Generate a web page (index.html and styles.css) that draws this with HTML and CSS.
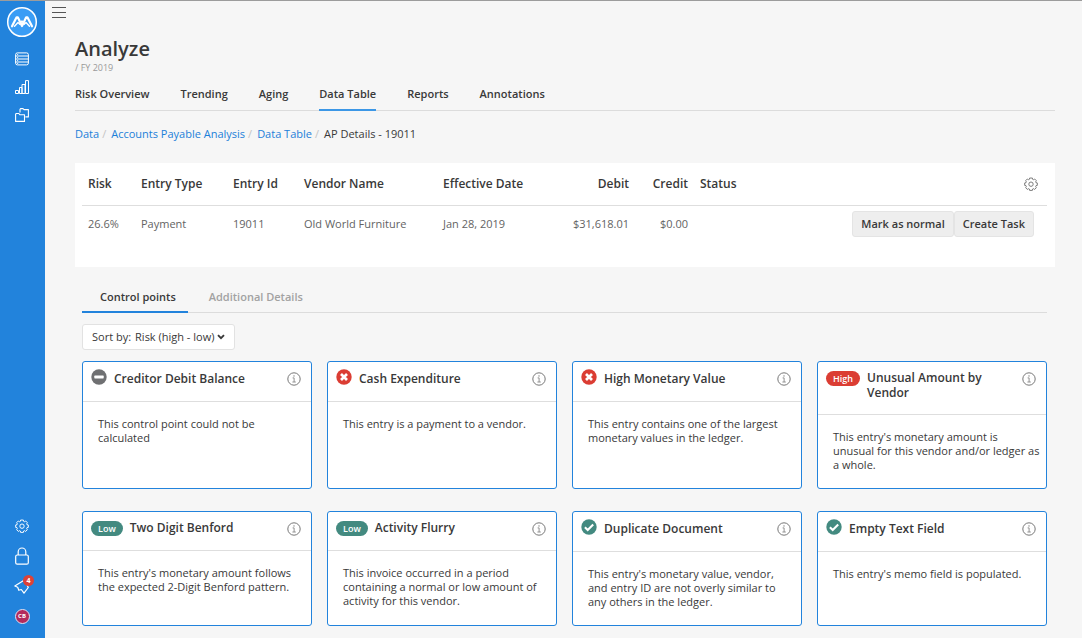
FILE: index.html
```html
<!DOCTYPE html>
<html lang="en">
<head>
<meta charset="utf-8">
<meta name="viewport" content="width=device-width, initial-scale=1">
<title>Analyze</title>
<link rel="stylesheet" href="styles.css">
</head>
<body>
<svg class="sprite" aria-hidden="true">
  <symbol id="gear" viewBox="0 0 16 16">
    <path fill="none" stroke="currentColor" stroke-width="1.100" stroke-linejoin="round" d="M6.400 1.200h3.200l.3 1.500.9.400 1.400-.8 1.900 1.900-.8 1.400.4.900 1.500.3v2.800l-1.500.3-.4 1 .8 1.300-1.900 2-1.400-.9-.9.400-.3 1.600H6.400l-.3-1.600-.9-.4-1.400.9-1.900-2 .8-1.300-.4-1-1.500-.3V6.800l1.500-.3.400-.9-.8-1.400 1.900-1.900 1.400.8.900-.4z"/>
    <circle cx="8" cy="8.200" r="2.500" fill="none" stroke="currentColor" stroke-width="1.100"/>
  </symbol>
  <symbol id="info" viewBox="0 0 14 14">
    <circle cx="7" cy="7" r="6.200" fill="none" stroke="currentColor"/>
    <path fill="none" stroke="currentColor" stroke-width=".8" d="M5.600 5.900h1.500v4M5.400 10h3.400"/>
    <circle cx="7" cy="3.900" r=".7" fill="currentColor"/>
  </symbol>
  <symbol id="minus" viewBox="0 0 16 16">
    <circle cx="8" cy="8" r="7.700" fill="#6f7072"/>
    <rect x="3.300" y="6.600" width="9.400" height="2.800" rx=".6" fill="#fff"/>
  </symbol>
  <symbol id="cross" viewBox="0 0 16 16">
    <circle cx="8" cy="8" r="7.700" fill="#db3d33"/>
    <path d="M5 5l6 6M11 5l-6 6" stroke="#fff" stroke-width="2.700"/>
  </symbol>
  <symbol id="check" viewBox="0 0 16 16">
    <circle cx="8" cy="8" r="7.700" fill="#438a80"/>
    <path d="M3.900 8.300l2.800 2.700 5.500-5.600" fill="none" stroke="#fff" stroke-width="2.100"/>
  </symbol>
</svg>

<div class="app">
  <nav class="sidebar" aria-label="Main">
    <a class="logo" href="#" aria-label="Home">
      <svg viewBox="0 0 32 32" width="32" height="32">
        <circle cx="16" cy="16" r="14.300" fill="#3a9df5" stroke="#fff" stroke-width="1.500"/>
        <g fill="none" stroke="#fff" stroke-linecap="round" stroke-linejoin="round">
          <path d="M6 20.300L10.600 11.300h1.200L16 20l4.200-8.700h1.200L26 20.300" stroke-width="2.200"/>
          <path d="M8.500 20.300l3.500-3.800 1.800 1.800L16 15l2.200 3.300 1.800-1.800 3.500 3.800" stroke-width="1.400"/>
        </g>
      </svg>
    </a>
    <a class="nav-link" href="#" aria-label="Data">
      <svg viewBox="0 0 14 14" width="14" height="14" fill="none" stroke="currentColor">
        <rect x=".6" y=".9" width="12.800" height="12" rx="1.800"/>
        <path d="M.6 4h12.800M.6 7h12.800M.6 10h12.800"/>
        <path stroke-width=".8" d="M2 2.500h1.200M2 5.500h1.200M2 8.500h1.200M2 11.500h1.200"/>
      </svg>
    </a>
    <a class="nav-link" href="#" aria-label="Analytics">
      <svg viewBox="0 0 14 14" width="14" height="14" fill="none" stroke="currentColor">
        <path d="M.5 10.500h3v3h-3zM4.500 7.500h2.500v6H4.500zM7 4.500h3v9H7zM10.500 .6h3v12.900h-3z"/>
      </svg>
    </a>
    <a class="nav-link" href="#" aria-label="Files">
      <svg viewBox="0 0 14 14" width="14" height="14" fill="none" stroke="currentColor" stroke-width="1.100" stroke-linejoin="round">
        <path d="M1.300 5.500h2.500l1 1.200h4.700v6.700H.6V6.200z"/>
        <path d="M5 4.500V1.300L5.600.6H8l1 1h4.400v7.300h-3"/>
      </svg>
    </a>
    <div class="sidebar-foot">
      <a class="foot-link" href="#" aria-label="Settings"><svg width="14" height="14"><use href="#gear"/></svg></a>
      <a class="foot-link" href="#" aria-label="Security">
        <svg viewBox="0 0 14 18" width="14" height="18" fill="none" stroke="currentColor" stroke-width="1.200">
          <rect x=".7" y="8" width="12.600" height="9.200" rx="1.500"/>
          <path d="M3.200 8V4.800a3.800 3.800 0 0 1 7.600 0V8"/>
        </svg>
      </a>
      <a class="foot-link" href="#" aria-label="Announcements, 4 new">
        <svg viewBox="0 0 16 16" width="16" height="16" fill="none" stroke="currentColor" stroke-width="1.200" stroke-linejoin="round">
          <path d="M.8 8L10.500 2l3.800 7.500L10 15.200 7.300 11.500l-2.500.8L3.700 9.300z"/>
        </svg>
        <span class="badge">4</span>
      </a>
      <a class="foot-link" href="#" aria-label="Account"><span class="avatar">CB</span></a>
    </div>
  </nav>

  <main class="main">
    <button class="menu" type="button" aria-label="Toggle menu">
      <svg viewBox="0 0 14 12" width="14" height="12" stroke="currentColor"><path d="M0 .5h14M0 5.500h14M0 10.500h14"/></svg>
    </button>
    <header class="heading">
      <h1>Analyze</h1>
      <p class="period">/ FY 2019</p>
    </header>
    <nav class="tabs" aria-label="Sections">
      <a class="tab" href="#">Risk Overview</a>
      <a class="tab" href="#">Trending</a>
      <a class="tab" href="#">Aging</a>
      <a class="tab tab-active" href="#">Data Table</a>
      <a class="tab" href="#">Reports</a>
      <a class="tab" href="#">Annotations</a>
    </nav>
    <nav class="crumbs" aria-label="Breadcrumb">
      <a href="#">Data</a><span class="slash">/</span><a href="#">Accounts Payable Analysis</a><span class="slash">/</span><a href="#">Data Table</a><span class="slash">/</span><span>AP Details - 19011</span>
    </nav>

    <section class="panel">
      <table class="entries">
        <colgroup><col class="c-risk"><col class="c-type"><col class="c-id"><col class="c-vendor"><col class="c-date"><col class="c-debit"><col class="c-credit"><col><col class="c-actions"></colgroup>
        <thead>
          <tr><th>Risk</th><th>Entry Type</th><th>Entry Id</th><th>Vendor Name</th><th>Effective Date</th><th class="num">Debit</th><th class="num">Credit</th><th>Status</th>
          <th class="tools"><button class="icon-btn" type="button" aria-label="Table settings"><svg width="14" height="14"><use href="#gear"/></svg></button></th></tr>
        </thead>
        <tbody>
          <tr><td>26.6%</td><td>Payment</td><td>19011</td><td>Old World Furniture</td><td>Jan 28, 2019</td><td class="num">$31,618.01</td><td class="num">$0.00</td><td></td>
          <td><div class="actions"><button class="btn" type="button">Mark as normal</button><button class="btn" type="button">Create Task</button></div></td></tr>
        </tbody>
      </table>
    </section>

    <section class="details">
      <div class="subtabs" role="tablist">
        <button class="subtab subtab-active" type="button" role="tab" aria-selected="true">Control points</button>
        <button class="subtab" type="button" role="tab" aria-selected="false">Additional Details</button>
      </div>
      <div class="sort">
        <label for="sort">Sort by:</label>
        <select id="sort"><option>Risk (high - low)</option><option>Risk (low - high)</option></select>
        <svg viewBox="0 0 8 6" width="8" height="6" aria-hidden="true"><path d="M1 1.200l3 3 3-3" fill="none" stroke="currentColor" stroke-width="1.900"/></svg>
      </div>

      <div class="cards">
        <article class="card">
          <header><svg class="mark" width="16" height="16"><use href="#minus"/></svg><h2>Creditor Debit Balance</h2><button class="icon-btn" type="button" aria-label="Info"><svg width="14" height="14"><use href="#info"/></svg></button></header>
          <p>This control point could not be calculated</p>
        </article>
        <article class="card">
          <header><svg class="mark" width="16" height="16"><use href="#cross"/></svg><h2>Cash Expenditure</h2><button class="icon-btn" type="button" aria-label="Info"><svg width="14" height="14"><use href="#info"/></svg></button></header>
          <p>This entry is a payment to a vendor.</p>
        </article>
        <article class="card">
          <header><svg class="mark" width="16" height="16"><use href="#cross"/></svg><h2>High Monetary Value</h2><button class="icon-btn" type="button" aria-label="Info"><svg width="14" height="14"><use href="#info"/></svg></button></header>
          <p>This entry contains one of the largest monetary values in the ledger.</p>
        </article>
        <article class="card card-rated">
          <header><span class="pill pill-high">High</span><h2>Unusual Amount by Vendor</h2><button class="icon-btn" type="button" aria-label="Info"><svg width="14" height="14"><use href="#info"/></svg></button></header>
          <p>This entry's monetary amount is unusual for this vendor and/or ledger as a whole.</p>
        </article>
        <article class="card card-rated">
          <header><span class="pill">Low</span><h2>Two Digit Benford</h2><button class="icon-btn" type="button" aria-label="Info"><svg width="14" height="14"><use href="#info"/></svg></button></header>
          <p>This entry's monetary amount follows the expected 2-Digit Benford pattern.</p>
        </article>
        <article class="card card-rated">
          <header><span class="pill">Low</span><h2>Activity Flurry</h2><button class="icon-btn" type="button" aria-label="Info"><svg width="14" height="14"><use href="#info"/></svg></button></header>
          <p>This invoice occurred in a period containing a normal or low amount of activity for this vendor.</p>
        </article>
        <article class="card">
          <header><svg class="mark" width="16" height="16"><use href="#check"/></svg><h2>Duplicate Document</h2><button class="icon-btn" type="button" aria-label="Info"><svg width="14" height="14"><use href="#info"/></svg></button></header>
          <p>This entry's monetary value, vendor, and entry ID are not overly similar to any others in the ledger.</p>
        </article>
        <article class="card">
          <header><svg class="mark" width="16" height="16"><use href="#check"/></svg><h2>Empty Text Field</h2><button class="icon-btn" type="button" aria-label="Info"><svg width="14" height="14"><use href="#info"/></svg></button></header>
          <p>This entry's memo field is populated.</p>
        </article>
      </div>
    </section>
  </main>
</div>
</body>
</html>
```
FILE: styles.css
```css
* { box-sizing: border-box; }
body {
  margin: 0;
  background: #f6f6f6;
  color: #393939;
  font-family: "Open Sans", "Noto Sans", sans-serif;
  font-size: 11px;
  line-height: 14px;
}
h1, h2, p { margin: 0; }
a { color: #1c80d9; text-decoration: none; }
button, select { font: inherit; color: inherit; border: 0; background: none; padding: 0; margin: 0; }
svg { display: block; }
.sprite { position: absolute; width: 0; height: 0; }

.app { display: flex; min-height: 100vh; border-top: 1px solid #9c9c9c; }

.sidebar {
  width: 45px;
  flex: none;
  background: #2283dc;
  display: flex;
  flex-direction: column;
  align-items: center;
  gap: 14px;
  padding: 5px 1px 12px 0;
}
.sidebar a { color: #fff; }
.nav-link { height: 14px; }
.sidebar-foot { margin-top: auto; display: flex; flex-direction: column; align-items: center; gap: 10px; }
.foot-link { position: relative; display: grid; place-items: center; width: 20px; height: 20px; }
.badge {
  position: absolute;
  top: -1px;
  right: -2px;
  width: 11px;
  height: 11px;
  border-radius: 50%;
  background: #dd4237;
  font-size: 7px;
  line-height: 11px;
  font-weight: 700;
  text-align: center;
}
.avatar {
  width: 15px;
  height: 15px;
  border: 1px solid #dfe4f4;
  border-radius: 50%;
  background: #b32a5c;
  font-size: 6px;
  line-height: 13px;
  font-weight: 700;
  text-align: center;
}

.main { flex: 1; min-width: 0; padding: 6px 27px 12px 30px; }
.menu { display: block; margin-left: -23px; color: #555; }
.heading { padding-top: 16px; }
h1 { font-size: 20px; line-height: 28px; font-weight: 600; }
.period { font-size: 9px; line-height: 10px; color: #9a9a9a; }

.tabs { display: flex; gap: 31px; margin-top: 14px; border-bottom: 1px solid #dcdcdc; }
.tab { color: #393939; font-weight: 600; padding-bottom: 8px; margin-bottom: -1px; border-bottom: 2px solid transparent; }
.tab-active { border-color: #3c97e6; }

.crumbs { margin-top: 16px; }
.slash { color: #c4c4c4; padding: 0 5px 0 3px; }

.panel { margin-top: 22px; padding: 0 8px 24px 7px; background: #fff; }
.entries { width: 100%; border-collapse: collapse; table-layout: fixed; }
.entries th, .entries td { padding: 0 6px; text-align: left; white-space: nowrap; }
.entries th { height: 42px; padding-top: 1px; font-size: 12px; font-weight: 600; border-bottom: 1px solid #dedede; }
.entries td { height: 38px; color: #636363; }
.entries .num { text-align: right; }
.c-risk { width: 53px; }
.c-type { width: 92px; }
.c-id { width: 71px; }
.c-vendor { width: 139px; }
.c-date { width: 110px; }
.c-debit { width: 88px; }
.c-credit { width: 59px; }
.c-actions { width: 210px; }
.icon-btn { flex: none; color: #777; }
.tools .icon-btn { display: block; margin: 0 3px 0 auto; }
.actions { display: flex; justify-content: flex-end; padding-right: 7px; }
.btn { height: 26px; padding: 0 8px; border: 1px solid #e4e4e4; border-radius: 3px; background: #eee; color: #393939; font-weight: 600; }

.details { padding: 17px 8px 0 7px; }
.subtabs { display: flex; border-bottom: 1px solid #dcdcdc; }
.subtab { padding: 6px 21px 7px; height: 29px; margin-bottom: -1px; border-bottom: 2px solid transparent; color: #a2a2a2; font-weight: 600; }
.subtab-active { padding: 6px 12px 7px 18px; border-color: #2283dc; color: #393939; }

.sort {
  display: inline-flex;
  align-items: center;
  height: 26px;
  margin: 11px 0;
  padding: 0 9px;
  border: 1px solid #e2e2e2;
  border-radius: 3px;
  background: #fff;
}
.sort select { appearance: none; margin-left: 4px; padding-right: 2px; }

.cards { display: grid; grid-template-columns: repeat(4, minmax(0, 1fr)); gap: 22px 15px; }
.card { min-height: 115px; background: #fff; border: 1px solid #2283dc; border-radius: 3px; }
.card:nth-child(-n+4) { min-height: 128px; }
.card header { display: flex; align-items: flex-start; padding: 9px 10px 15px 8px; border-bottom: 1px solid #dedede; }
.card h2 { flex: 1; font-size: 12px; line-height: 15px; font-weight: 600; margin-left: 7px; }
.card .mark { margin-top: -2px; }
.card .icon-btn { margin-top: 1px; }
.card p { padding: 15px; }
.card-rated header { padding-top: 8px; padding-bottom: 14px; }
.card-rated .icon-btn { margin-top: 2px; }
.card-rated p { padding-right: 5px; }
.pill { flex: none; margin-top: 1px; padding: 0 7px; border-radius: 8px; background: #438a80; color: #fff; font-size: 9px; line-height: 15px; font-weight: 600; }
.pill-high { background: #db3d33; }
```
